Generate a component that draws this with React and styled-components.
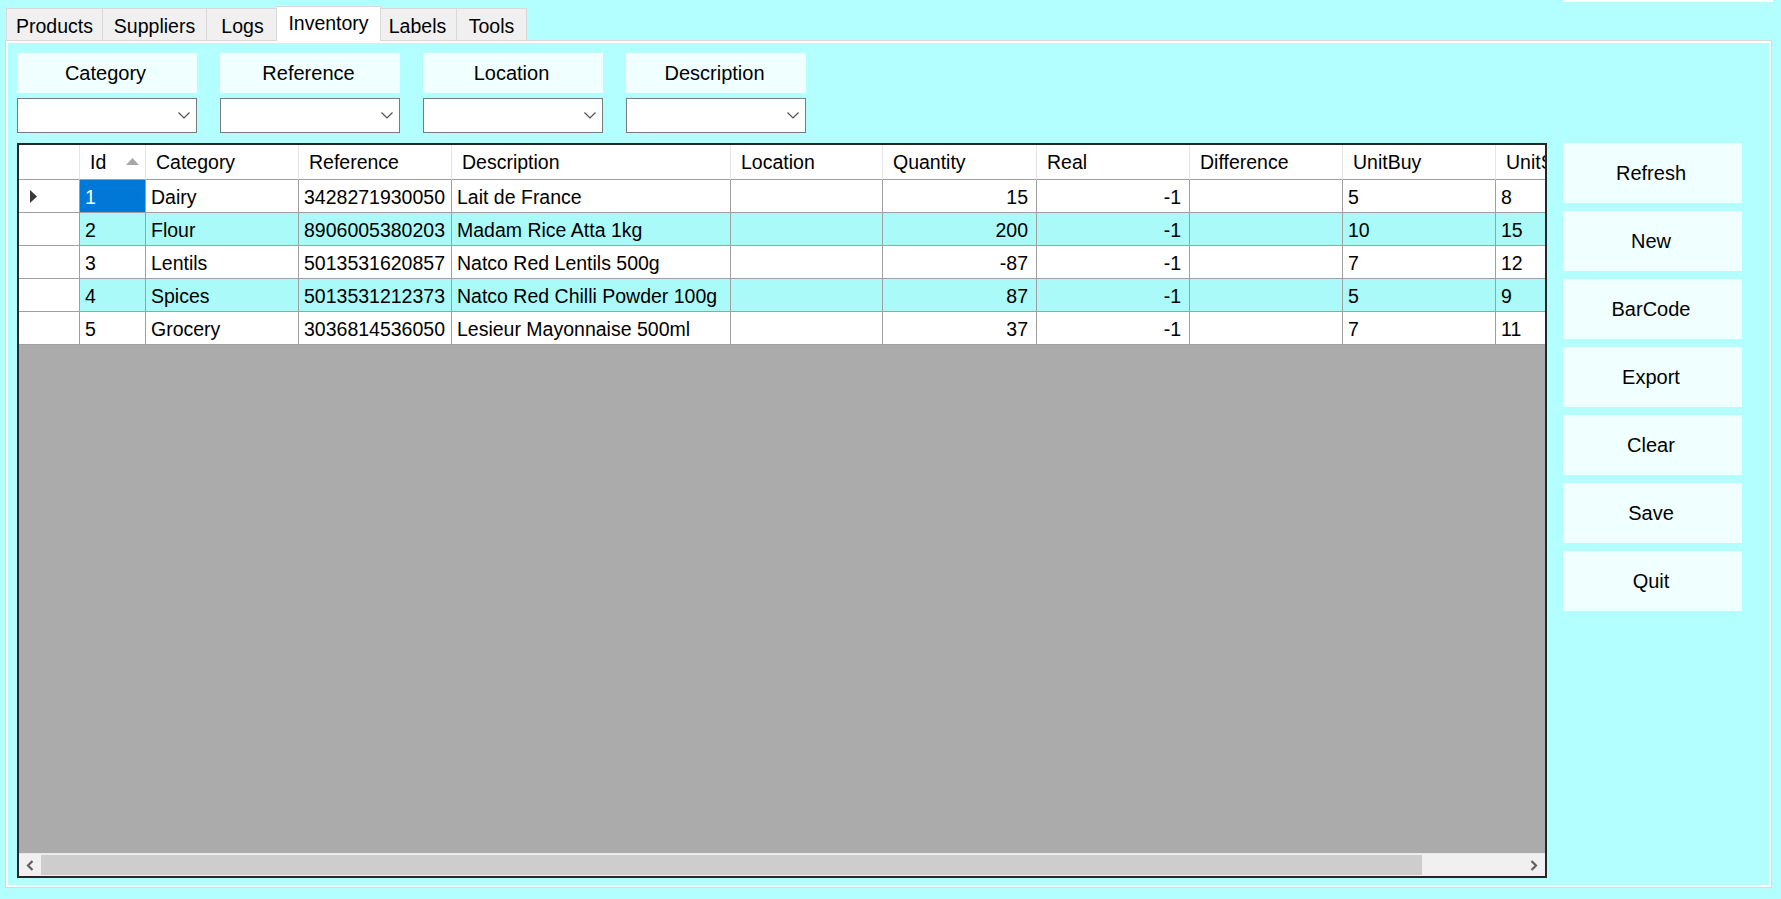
import React from "react";
import styled, { createGlobalStyle, css } from "styled-components";

const Global = createGlobalStyle`
  html, body { margin: 0; padding: 0; background: #b3ffff; }
  body { font-family: "Liberation Sans", Arial, sans-serif; color: #000; }
  * { box-sizing: border-box; }
`;

const Page = styled.div`
  width: 1781px;
  height: 899px;
  background: #b3ffff;
  overflow: hidden;
  display: flex;
  flex-direction: column;
  font-size: 19.5px;
`;

const TopBar = styled.div`
  height: 40px;
  display: flex;
  align-items: flex-end;
  padding-left: 7px;
  position: relative;
  z-index: 2;
`;

const TabStrip = styled.div`
  display: flex;
  align-items: flex-end;
`;

const Tab = styled.div`
  width: ${(p) => p.$w}px;
  height: 32px;
  background: #f0f0f0;
  border: 1px solid #d9d9d9;
  border-bottom: none;
  margin-left: -1px;
  display: flex;
  justify-content: center;
  align-items: flex-start;
  padding-top: 6px;
  white-space: nowrap;
  ${(p) =>
    p.$active &&
    css`
      background: #ffffff;
      height: 35px;
      width: ${p.$w + 4}px;
      margin: 0 -2px -1px -3px;
      padding-top: 5px;
      position: relative;
      z-index: 3;
    `}
`;

const TopField = styled.div`
  margin-left: auto;
  margin-right: 8px;
  align-self: flex-start;
  width: 210px;
  height: 2px;
  background: #ffffff;
`;

const TabPanel = styled.div`
  margin-left: 5px;
  width: 1767px;
  height: 848px;
  border: 1px solid #d9d9d9;
  box-shadow: inset 0 0 0 2px #ffffff;
  background: #b3ffff;
  padding: 12px 0 0 11px;
  display: flex;
  flex-direction: column;
`;

const FilterRow = styled.div`
  display: flex;
  gap: 23px;
`;

const FilterGroup = styled.div`
  width: 180px;
  display: flex;
  flex-direction: column;
  gap: 5px;
`;

const FilterLabel = styled.div`
  height: 40px;
  background: #f0ffff;
  display: flex;
  align-items: center;
  justify-content: center;
  font-size: 20px;
  padding-right: 3px;
`;

const Combo = styled.div`
  height: 35px;
  background: #ffffff;
  border: 1px solid #7a7a7a;
  display: flex;
  align-items: center;
  justify-content: flex-end;
  padding-right: 6px;
`;

const MainRow = styled.div`
  display: flex;
  gap: 16px;
  margin-top: 10px;
`;

const Grid = styled.div`
  width: 1530px;
  height: 735px;
  border: 2px solid #262626;
  background: #ababab;
  display: flex;
  flex-direction: column;
  overflow: hidden;
`;

const GridBody = styled.div`
  flex: 1;
  overflow: hidden;
`;

const COLS = "61px 66px 153px 153px 279px 152px 154px 153px 153px 153px 153px";

const Row = styled.div`
  display: grid;
  grid-template-columns: ${COLS};
  width: max-content;
  height: ${(p) => (p.$header ? 35 : 33)}px;
`;

const HeaderCell = styled.div`
  background: #ffffff;
  border-right: 1px solid #e5e5e5;
  border-bottom: 1px solid #a0a0a0;
  display: flex;
  align-items: center;
  padding: 1px 6px 0 10px;
  white-space: nowrap;
  overflow: hidden;
`;

const Cell = styled.div`
  background: ${(p) => (p.$selected ? "#0078d7" : p.$alt ? "#aafafa" : "#ffffff")};
  color: ${(p) => (p.$selected ? "#ffffff" : "#000000")};
  border-right: 1px solid #a0a0a0;
  border-bottom: 1px solid #a0a0a0;
  display: flex;
  align-items: center;
  justify-content: ${(p) => (p.$right ? "flex-end" : "flex-start")};
  padding: 3px ${(p) => (p.$right ? 8 : 5)}px 0 5px;
  white-space: nowrap;
  overflow: hidden;
`;

const RowHeaderCell = styled.div`
  background: #ffffff;
  border-right: 1px solid #a0a0a0;
  border-bottom: 1px solid #a0a0a0;
  display: flex;
  align-items: center;
  padding-left: 11px;
`;

const SortGlyph = styled.svg`
  margin-left: auto;
  margin-top: -2px;
`;

const ScrollBar = styled.div`
  height: 23px;
  background: #f0f0f0;
  border-top: 1px solid #e8e8e8;
  display: flex;
  align-items: stretch;
`;

const ScrollArrow = styled.div`
  width: 22px;
  display: flex;
  align-items: center;
  justify-content: center;
`;

const ScrollThumb = styled.div`
  width: ${(p) => p.$w}px;
  margin: 1px 0;
  background: #cdcdcd;
`;

const ScrollTrack = styled.div`
  flex: 1;
`;

const ButtonColumn = styled.div`
  width: 179px;
  display: flex;
  flex-direction: column;
  gap: 8px;
`;

const ActionButton = styled.button`
  height: 60px;
  width: 100%;
  border: none;
  background: #f0ffff;
  font-family: "Liberation Sans", Arial, sans-serif;
  font-size: 20px;
  color: #000;
  padding: 0 3px 0 0;
  cursor: pointer;
`;

const tabs = [
  { label: "Products", w: 97 },
  { label: "Suppliers", w: 105 },
  { label: "Logs", w: 73 },
  { label: "Inventory", w: 101, active: true },
  { label: "Labels", w: 79 },
  { label: "Tools", w: 71 },
];

const filters = ["Category", "Reference", "Location", "Description"];

const headers = [
  "Id",
  "Category",
  "Reference",
  "Description",
  "Location",
  "Quantity",
  "Real",
  "Difference",
  "UnitBuy",
  "UnitSell",
];

const rows = [
  ["1", "Dairy", "3428271930050", "Lait de France", "", "15", "-1", "", "5", "8"],
  ["2", "Flour", "8906005380203", "Madam Rice Atta 1kg", "", "200", "-1", "", "10", "15"],
  ["3", "Lentils", "5013531620857", "Natco Red Lentils 500g", "", "-87", "-1", "", "7", "12"],
  ["4", "Spices", "5013531212373", "Natco Red Chilli Powder 100g", "", "87", "-1", "", "5", "9"],
  ["5", "Grocery", "3036814536050", "Lesieur Mayonnaise 500ml", "", "37", "-1", "", "7", "11"],
];

const rightAligned = new Set([5, 6]);

const buttons = ["Refresh", "New", "BarCode", "Export", "Clear", "Save", "Quit"];

const Chevron = () => (
  <svg width="12" height="7" viewBox="0 0 12 7">
    <polyline points="0.5,0.5 6,6 11.5,0.5" fill="none" stroke="#505050" strokeWidth="1.2" />
  </svg>
);

const RowArrow = () => (
  <svg width="7" height="13" viewBox="0 0 7 13">
    <polygon points="0,0 7,6.5 0,13" fill="#3a3a3a" />
  </svg>
);

export default function App() {
  return (
    <Page>
      <Global />
      <TopBar>
        <TabStrip>
          {tabs.map((t) => (
            <Tab key={t.label} $w={t.w} $active={t.active}>
              {t.label}
            </Tab>
          ))}
        </TabStrip>
        <TopField />
      </TopBar>
      <TabPanel>
        <FilterRow>
          {filters.map((f) => (
            <FilterGroup key={f}>
              <FilterLabel>{f}</FilterLabel>
              <Combo>
                <Chevron />
              </Combo>
            </FilterGroup>
          ))}
        </FilterRow>
        <MainRow>
          <Grid>
            <GridBody>
              <Row $header>
                <HeaderCell />
                {headers.map((h, i) => (
                  <HeaderCell key={h}>
                    {h}
                    {i === 0 && (
                      <SortGlyph width="13" height="7" viewBox="0 0 13 7">
                        <polygon points="0,7 6.5,0 13,7" fill="#a8a8a8" />
                      </SortGlyph>
                    )}
                  </HeaderCell>
                ))}
              </Row>
              {rows.map((r, ri) => (
                <Row key={r[0]}>
                  <RowHeaderCell>{ri === 0 && <RowArrow />}</RowHeaderCell>
                  {r.map((v, ci) => (
                    <Cell
                      key={ci}
                      $alt={ri % 2 === 1}
                      $selected={ri === 0 && ci === 0}
                      $right={rightAligned.has(ci)}
                    >
                      {v}
                    </Cell>
                  ))}
                </Row>
              ))}
            </GridBody>
            <ScrollBar>
              <ScrollArrow>
                <svg width="8" height="11" viewBox="0 0 8 11">
                  <polyline points="6.5,1 2,5.5 6.5,10" fill="none" stroke="#606060" strokeWidth="2.2" />
                </svg>
              </ScrollArrow>
              <ScrollThumb $w={1381} />
              <ScrollTrack />
              <ScrollArrow>
                <svg width="8" height="11" viewBox="0 0 8 11">
                  <polyline points="1.5,1 6,5.5 1.5,10" fill="none" stroke="#606060" strokeWidth="2.2" />
                </svg>
              </ScrollArrow>
            </ScrollBar>
          </Grid>
          <ButtonColumn>
            {buttons.map((b) => (
              <ActionButton key={b}>{b}</ActionButton>
            ))}
          </ButtonColumn>
        </MainRow>
      </TabPanel>
    </Page>
  );
}
